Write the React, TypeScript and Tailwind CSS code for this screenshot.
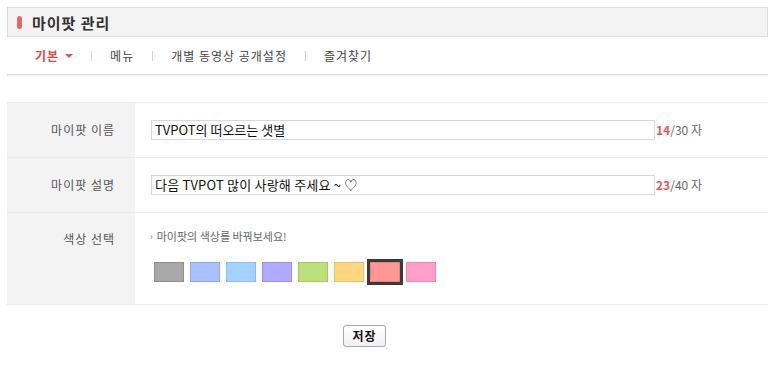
const swatches = [
  { bg: 'bg-[#a8a8a8]', border: 'border-[#8e8e8e]' },
  { bg: 'bg-[#abc1ff]', border: 'border-[#91a9f2]' },
  { bg: 'bg-[#a2d2ff]', border: 'border-[#8abcf0]' },
  { bg: 'bg-[#b2aaff]', border: 'border-[#9a90f0]' },
  { bg: 'bg-[#bbe07c]', border: 'border-[#a1ca5e]' },
  { bg: 'bg-[#ffd782]', border: 'border-[#ebc35c]' },
  { bg: 'bg-[#ff9894]', border: 'border-[#f07e7a]', selected: true },
  { bg: 'bg-[#ff9ec9]', border: 'border-[#f087b4]' },
];

function Sep() {
  return <span className="mx-[18px] h-[10px] w-px bg-[#d4d4d4]" />;
}

export default function App() {
  return (
    <div className="w-[773px] h-[365px] bg-white pl-[7px] pt-[7px] text-[#333] font-['Noto_Sans_CJK_KR','Noto_Sans',sans-serif]">
      <div className="w-[761px]">
        {/* title bar */}
        <div className="flex h-[30px] items-center border border-[#dcdcdc] bg-[#f3f3f3] pl-[9px]">
          <span className="h-[13px] w-[5px] rounded-full bg-[#e36868]" />
          <h1 className="ml-[10px] text-[15px] font-bold leading-none tracking-[1px] text-[#333]">마이팟 관리</h1>
        </div>

        {/* tabs */}
        <div className="flex h-[37px] items-center pl-[28px] text-[12px] leading-none tracking-[1px] text-[#444]">
          <span className="font-semibold text-[#d64a4a]">기본</span>
          <span className="ml-[6px] mt-[1px] h-0 w-0 border-x-[4px] border-t-[4px] border-x-transparent border-t-[#e05555]" />
          <Sep />
          <span>메뉴</span>
          <Sep />
          <span>개별 동영상 공개설정</span>
          <Sep />
          <span>즐겨찾기</span>
        </div>
        <div className="h-[3px] border-t border-[#dddddd] bg-[#f5f5f5]" />

        {/* form */}
        <div className="mt-[25px] border-y border-[#ececec] text-[12px]">
          <div className="flex h-[55px] border-b border-[#ececec]">
            <div className="flex w-[128px] items-center justify-end bg-[#f3f3f3] pr-[20px] tracking-[1px] text-[#555]">마이팟 이름</div>
            <div className="flex items-center pl-[16px]">
              <div className="flex h-[20px] w-[504px] items-center border border-[#d8d8d8] pl-[3px] text-[13px] text-[#111]">TVPOT의 떠오르는 샛별</div>
              <span className="ml-[1px] text-[#666]"><b className="text-[#e05a5a]">14</b>/30 자</span>
            </div>
          </div>
          <div className="flex h-[55px] border-b border-[#ececec]">
            <div className="flex w-[128px] items-center justify-end bg-[#f3f3f3] pr-[20px] tracking-[1px] text-[#555]">마이팟 설명</div>
            <div className="flex items-center pl-[16px]">
              <div className="flex h-[20px] w-[504px] items-center border border-[#d8d8d8] pl-[3px] text-[13px] tracking-[0.2px] text-[#111]">다음 TVPOT 많이 사랑해 주세요 ~ ♡</div>
              <span className="ml-[1px] text-[#666]"><b className="text-[#e05a5a]">23</b>/40 자</span>
            </div>
          </div>
          <div className="flex h-[91px]">
            <div className="w-[128px] bg-[#f3f3f3] pr-[20px] pt-[17px] text-right tracking-[1px] text-[#555]">색상 선택</div>
            <div className="pl-[15px] pt-[18px]">
              <p className="flex items-center text-[11px] leading-none text-[#666]">
                <span className="mr-[4px] text-[9px]">›</span>마이팟의 색상를 바꿔보세요!
              </p>
              <div className="mt-[20px] flex gap-[6px] pl-[4px]">
                {swatches.map((s, i) => (
                  <span
                    key={i}
                    className={`h-[20px] w-[30px] border ${s.bg} ${s.border} ${s.selected ? 'outline-[3px] outline-solid outline-[#3a3a3a]' : ''}`}
                  />
                ))}
              </div>
            </div>
          </div>
        </div>

        <button className="ml-[336px] mt-[20px] h-[22px] w-[43px] rounded-[3px] border border-[#a8a8a8] bg-gradient-to-b from-white to-[#f0f0f0] text-[12px] font-bold leading-none tracking-[1px] text-[#111]">
          저장
        </button>
      </div>
    </div>
  );
}
